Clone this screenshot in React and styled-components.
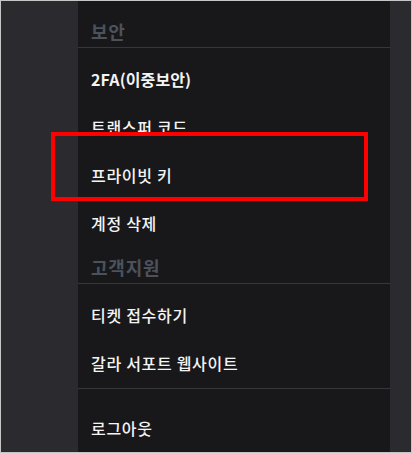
import styled, { createGlobalStyle } from 'styled-components';

const GlobalStyle = createGlobalStyle`
  html, body {
    margin: 0;
    padding: 0;
    background: #2b2b2f;
  }
  * {
    box-sizing: border-box;
  }
`;

const Frame = styled.div`
  position: relative;
  width: 412px;
  height: 453px;
  border: 1px solid #c6c6c6;
  background: #2b2b2f;
  display: flex;
  overflow: hidden;
  font-family: "Noto Sans CJK KR", "Noto Sans", sans-serif;
`;

const Gutter = styled.div`
  width: ${(p) => p.$w}px;
  flex-shrink: 0;
`;

const Panel = styled.nav`
  width: 312px;
  flex-shrink: 0;
  background: #18181b;
  padding-top: 10px;
  display: flex;
  flex-direction: column;
`;

const SectionTitle = styled.div`
  padding: 8px 13px 4px;
  line-height: 24px;
  font-size: 18px;
  font-weight: 700;
  letter-spacing: 0.8px;
  color: #4b525c;
  border-bottom: 1px solid #36363c;
`;

const List = styled.ul`
  list-style: none;
  margin: 0;
  padding: ${(p) => p.$pt}px 0 ${(p) => p.$pb || 0}px;
  border-bottom: ${(p) => (p.$divider ? '1px solid #36363c' : 'none')};
`;

const Item = styled.li`
  height: 48px;
  display: flex;
  align-items: center;
  padding: 0 13px;
  font-size: 16px;
  font-weight: ${(p) => (p.$bold ? 700 : 500)};
  letter-spacing: ${(p) => (p.$bold ? 0.1 : 0.7)}px;
  color: #f4f4f4;
`;

const Highlight = styled.div`
  position: absolute;
  left: 50px;
  top: 131px;
  width: 317px;
  height: 69px;
  border: 4px solid #ff0000;
  pointer-events: none;
`;

export default function App() {
  return (
    <>
      <GlobalStyle />
      <Frame>
        <Gutter $w={77} />
        <Panel>
          <SectionTitle>보안</SectionTitle>
          <List $pt={7}>
            <Item $bold>2FA(이중보안)</Item>
            <Item>트랜스퍼 코드</Item>
            <Item>프라이빗 키</Item>
            <Item>계정 삭제</Item>
          </List>
          <SectionTitle>고객지원</SectionTitle>
          <List $pt={7} $pb={1} $divider>
            <Item>티켓 접수하기</Item>
            <Item>갈라 서포트 웹사이트</Item>
          </List>
          <List $pt={15}>
            <Item>로그아웃</Item>
          </List>
        </Panel>
        <Gutter $w={21} />
        <Highlight />
      </Frame>
    </>
  );
}
